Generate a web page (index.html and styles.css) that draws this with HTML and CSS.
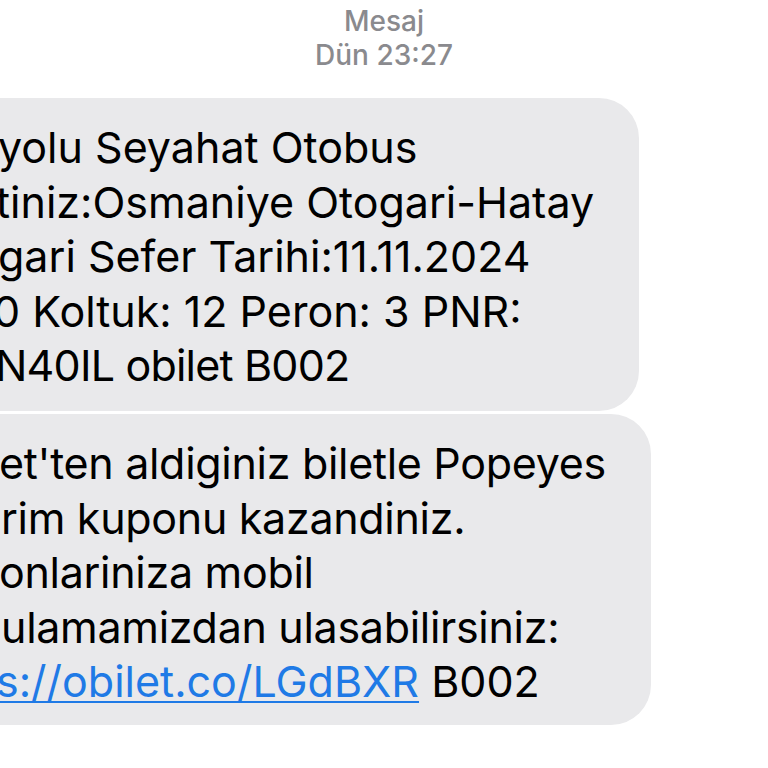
FILE: index.html
```html
<!DOCTYPE html>
<html lang="tr">
<head>
<meta charset="utf-8">
<title>Mesaj</title>
<link rel="stylesheet" href="styles.css">
</head>
<body>
<div class="screen">
  <header class="meta">
    <div class="meta-title">Mesaj</div>
    <div class="meta-time">Dün 23:27</div>
  </header>
  <main class="thread">
    <div class="bubble">
      <div class="line">yolu Seyahat Otobus</div>
      <div class="line cut-s">tiniz:Osmaniye Otogari-Hatay</div>
      <div class="line">gari Sefer Tarihi:11.11.2024</div>
      <div class="line cut-l">0 Koltuk: 12 Peron: 3 PNR:</div>
      <div class="line cut-m tight">N40IL obilet B002</div>
    </div>
    <div class="bubble bubble-last">
      <div class="line in-s">et'ten aldiginiz biletle Popeyes</div>
      <div class="line in-m">rim kuponu kazandiniz.</div>
      <div class="line in-s">onlariniza mobil</div>
      <div class="line in-m">ulamamizdan ulasabilirsiniz:</div>
      <div class="line cut-s"><a class="link" href="#">s://obilet.co/LGdBXR</a> B002</div>
    </div>
  </main>
</div>
</body>
</html>
```
FILE: styles.css
```css
html, body {
  margin: 0;
  padding: 0;
  background: #ffffff;
}
.screen {
  width: 768px;
  height: 768px;
  overflow: hidden;
  font-family: Inter, "Liberation Sans", Arial, sans-serif;
}
.meta {
  text-align: center;
  color: #8a8a8e;
  font-size: 28px;
  font-weight: 500;
  line-height: 34px;
  padding-top: 4px;
}
.thread {
  display: flex;
  flex-direction: column;
  align-items: flex-start;
  gap: 3px;
  margin-top: 26px;
}
.bubble {
  background: #e9e9eb;
  border-radius: 40px;
  margin-left: -60px;
  padding: 22px 45px 18px 58px;
  color: #000;
  font-size: 43px;
  line-height: 54.6px;
  white-space: nowrap;
}
.bubble-last {
  padding-bottom: 16px;
  letter-spacing: -0.3px;
}
.bubble-last .cut-s {
  letter-spacing: 0;
}
.line {
  display: block;
}
.tight { letter-spacing: -0.8px; }
.cut-s { margin-left: -2px; }
.cut-m { margin-left: -3px; }
.cut-l { margin-left: -5px; }
.in-s { margin-left: 1px; }
.in-m { margin-left: 3px; }
.link {
  color: #1f7ae6;
  text-decoration: underline;
  text-decoration-thickness: 2px;
  text-underline-offset: 4px;
}
```
